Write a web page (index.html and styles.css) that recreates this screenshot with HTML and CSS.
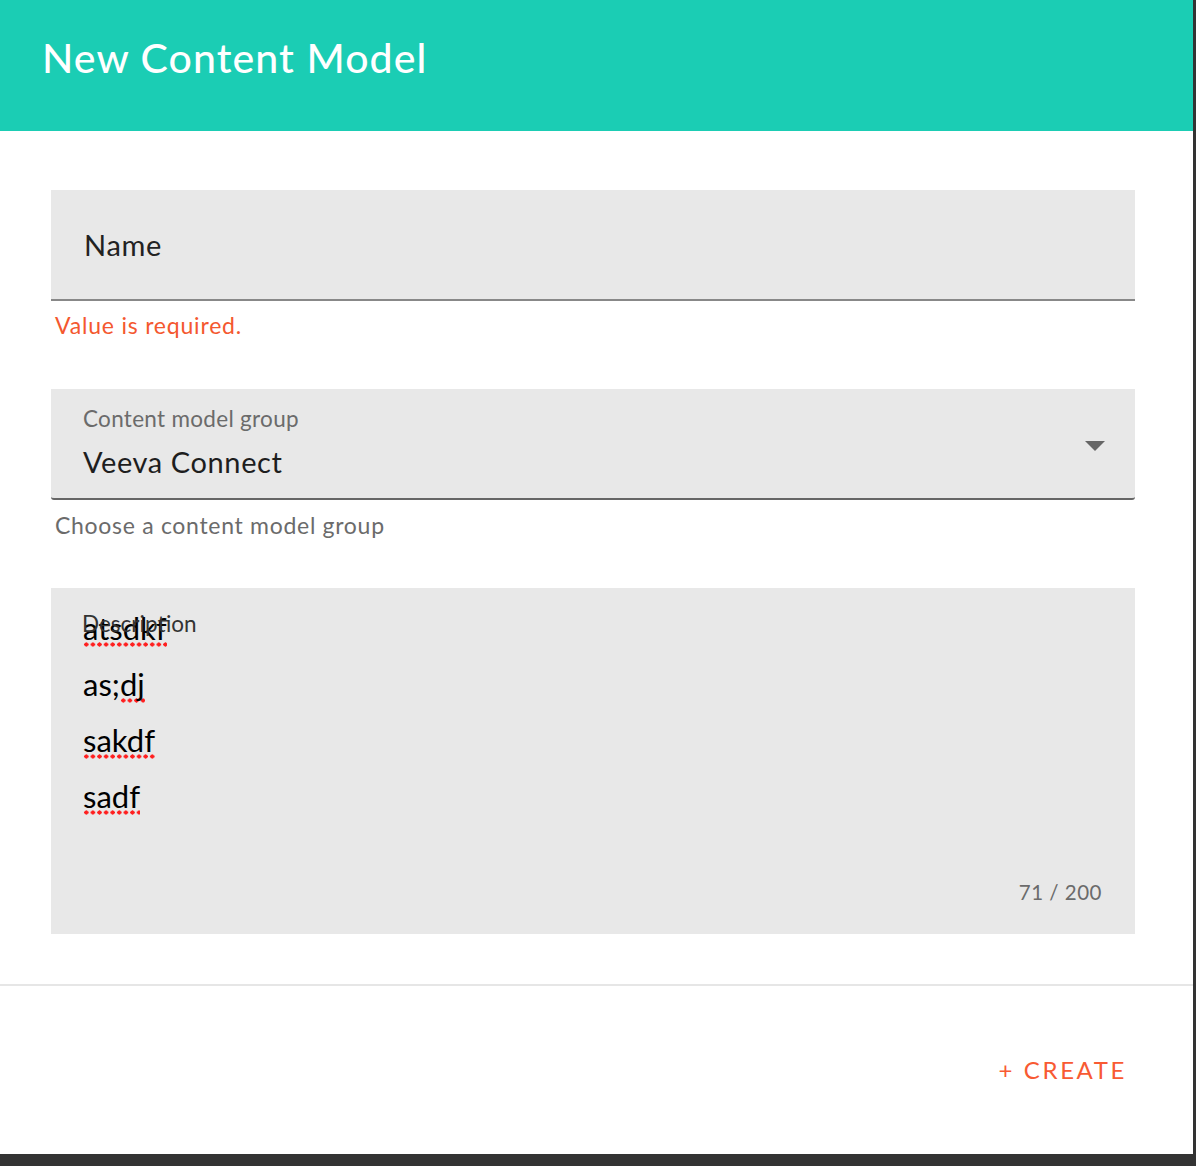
FILE: index.html
```html
<!DOCTYPE html>
<html lang="en">
<head>
<meta charset="utf-8">
<title>New Content Model</title>
<link rel="stylesheet" href="styles.css">
</head>
<body>
<div class="dialog">
  <header class="dialog-header">
    <h1 class="dialog-title">New Content Model</h1>
  </header>
  <main class="dialog-body">
    <div class="form-item">
      <div class="field field-name">
        <span class="field-placeholder">Name</span>
      </div>
      <div class="helper helper-error">Value is required.</div>
    </div>
    <div class="form-item">
      <div class="field field-select">
        <div class="select-texts">
          <span class="field-label">Content model group</span>
          <span class="field-value">Veeva Connect</span>
        </div>
        <span class="select-arrow"></span>
      </div>
      <div class="helper">Choose a content model group</div>
    </div>
    <div class="field field-textarea">
      <span class="textarea-label">Description</span>
      <div class="textarea-lines">
        <div class="tline"><span class="misspelled">atsdkf</span></div>
        <div class="tline">as;<span class="misspelled">dj</span></div>
        <div class="tline"><span class="misspelled">sakdf</span></div>
        <div class="tline"><span class="misspelled">sadf</span></div>
      </div>
      <div class="counter">71 / 200</div>
    </div>
  </main>
  <footer class="dialog-footer">
    <button class="create-btn" type="button">+ CREATE</button>
  </footer>
</div>
</body>
</html>
```
FILE: styles.css
```css
html, body {
  margin: 0;
  padding: 0;
}
body {
  background: #333333;
  font-family: "Lato", "Open Sans", sans-serif;
  width: 1196px;
  height: 1166px;
  overflow: hidden;
}
.dialog {
  width: 1193px;
  height: 1154px;
  background: #ffffff;
  display: flex;
  flex-direction: column;
}
.dialog-header {
  height: 131px;
  background: #1bcdb4;
  display: flex;
  align-items: center;
  padding-left: 42px;
  box-sizing: border-box;
}
.dialog-title {
  margin: 0 0 16px 0;
  color: #ffffff;
  font-size: 41px;
  font-weight: 500;
  letter-spacing: 1.1px;
}
.dialog-body {
  padding: 59px 58px 0 51px;
  display: flex;
  flex-direction: column;
}
.form-item {
  display: flex;
  flex-direction: column;
}
.field {
  background: #e8e8e8;
  box-sizing: border-box;
  padding: 0 33px;
}
.field-name {
  height: 111px;
  border-bottom: 2px solid #888888;
  display: flex;
  align-items: center;
}
.field-placeholder {
  font-size: 29px;
  color: #222222;
  letter-spacing: 0.7px;
}
.helper {
  font-size: 23px;
  line-height: 24px;
  color: #6b6b6b;
  padding-left: 4px;
  margin-top: 13px;
  margin-bottom: 51px;
  letter-spacing: 0.7px;
}
.helper-error {
  color: #f4582f;
  letter-spacing: 0.8px;
  margin-top: 12px;
  margin-bottom: 52px;
}
.field-select {
  height: 111px;
  border-bottom: 2px solid #666666;
  border-radius: 0 0 3px 3px;
  display: flex;
  align-items: center;
  justify-content: space-between;
  padding-right: 30px;
}
.select-texts {
  display: flex;
  flex-direction: column;
  margin-top: 9px;
}
.field-label {
  font-size: 22.5px;
  line-height: 28px;
  color: #6b6b6b;
  letter-spacing: 0.3px;
  margin-left: -1px;
}
.field-value {
  font-size: 29px;
  line-height: 58px;
  color: #1e1e1e;
  letter-spacing: 0.6px;
  margin-left: -1px;
}
.select-arrow {
  width: 0;
  height: 0;
  border-left: 10px solid transparent;
  border-right: 10px solid transparent;
  border-top: 10px solid #666666;
  margin-top: 4px;
}
.field-textarea {
  position: relative;
  height: 346px;
  display: flex;
  flex-direction: column;
  padding-top: 12px;
}
.textarea-label {
  position: absolute;
  left: 31px;
  top: 22px;
  font-size: 22.5px;
  line-height: 28px;
  color: #333333;
}
.textarea-lines {
  flex: 1;
  color: #000000;
  font-size: 31px;
  line-height: 56px;
  margin-left: -1px;
}
.tline {
  height: 56px;
}
.misspelled {
  background-image: radial-gradient(circle at center, #ff1f1f 1.9px, transparent 2.3px);
  background-size: 6.6px 5px;
  background-repeat: repeat-x;
  background-position: left 0 bottom 0;
}
.counter {
  align-self: flex-end;
  font-size: 20.5px;
  color: #6b6b6b;
  margin-bottom: 30px;
  letter-spacing: 0.5px;
}
.dialog-footer {
  margin-top: 50px;
  border-top: 2px solid #e6e6e6;
  flex: 1;
  display: flex;
  justify-content: flex-end;
  align-items: center;
  padding-right: 66px;
}
.create-btn {
  background: none;
  border: none;
  padding: 0;
  font-family: inherit;
  font-size: 24px;
  letter-spacing: 2.6px;
  color: #f85a33;
  cursor: pointer;
  margin-bottom: 2px;
}
```
